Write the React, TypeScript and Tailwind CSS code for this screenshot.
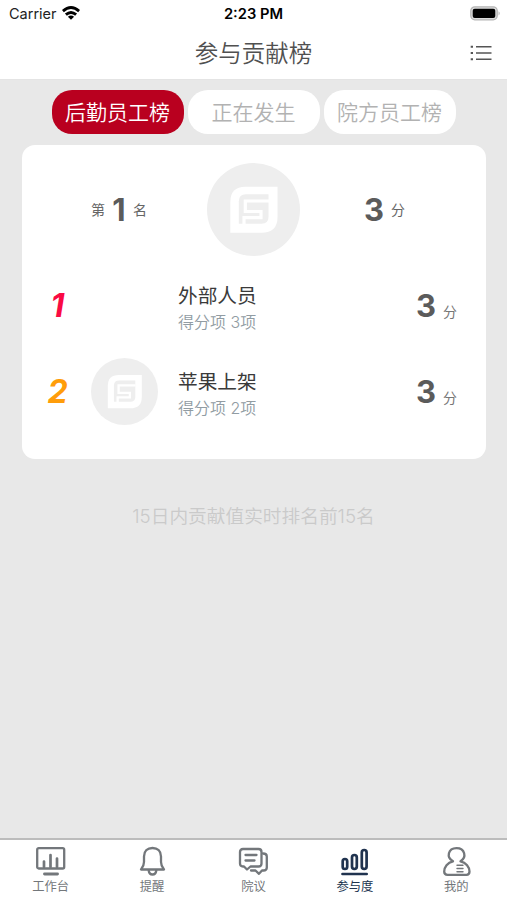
import React from "react";

const CJK = "font-['Inter','Noto_Sans_CJK_SC',sans-serif]";

function Logo({ className }: { className: string }) {
  return (
    <svg viewBox="0 0 93 93" className={className}>
      <circle cx="46.5" cy="46.5" r="46.5" fill="#eeeeee" />
      <path d="M23.300 69.700V39Q23.300 23.700 38.500 23.700H70.500V54Q70.500 69.700 54.500 69.700Z" fill="#ffffff" />
      <path d="M31.800 60.700V38.500Q31.800 31.300 39 31.300H61.500V54Q61.500 60.700 54.500 60.700Z" fill="#eeeeee" />
      <path d="M62 38H38.300V48.500H54V54.700H37V61" fill="none" stroke="#fff" strokeWidth="3.200" />
    </svg>
  );
}

function Wifi() {
  return (
    <svg viewBox="0 0 18 14" className="h-[14px] w-[18px] -translate-y-[1px]" fill="none" stroke="#000" strokeWidth="2.900">
      <path d="M.9 5.100Q9-2 17.100 5.100" />
      <path d="M3.900 8.600Q9 4.200 14.100 8.600" />
      <path d="M9 13.700L5.900 10.700Q9 8.300 12.100 10.700Z" fill="#000" stroke="none" />
    </svg>
  );
}

function Battery() {
  return (
    <svg viewBox="0 0 31 15" className="h-[15px] w-[31px] -translate-y-[1px]">
      <rect x=".8" y=".8" width="26.400" height="13" rx="4" fill="#ddd" stroke="#b5b5b5" strokeWidth="1.300" />
      <rect x="2.700" y="2.700" width="22.600" height="9.200" rx="2" fill="#000" />
      <path d="M28.600 5.200Q30.600 7.300 28.600 9.400Z" fill="#aaa" />
    </svg>
  );
}

function ListIcon() {
  return (
    <svg viewBox="0 0 22 16" className="h-4 w-[22px] -translate-y-[1px]" fill="none" stroke="#555" strokeWidth="1.500">
      <path d="M6 1.700H21.500M6 8H21.500M6 14.300H21.500" />
      <path d="M.7 1.700H3M.7 8H3M.7 14.300H3" strokeWidth="2" />
    </svg>
  );
}

const tabIcons = [
  <>
    <rect x="2.200" y="2.200" width="27" height="20.300" rx="1.500" />
    <path d="M9 21V15.500M15.500 21V9M22 21V12.500" strokeWidth="2.700" />
    <path d="M9.500 28H22.500" strokeWidth="2.900" />
  </>,
  <>
    <path d="M4 23.500H27Q24 20 24 16V10.500C24 5 20.500 2 15.500 2S7 5 7 10.500V16Q7 20 4 23.500Z" />
    <path d="M11.700 24.500Q12.200 28.500 15.500 28.500T19.300 24.500" />
  </>,
  <>
    <path d="M5 3H20.500Q23.500 3 23.500 6V17.500Q23.500 20.500 20.500 20.500H12.500L9 23.500L6 20.500H5Q2 20.500 2 17.500V6Q2 3 5 3Z" />
    <path d="M7.500 9H18.500M7.500 14.500H16.500" />
    <path d="M25 7.500Q28.800 7.500 28.800 10.500V21.500Q28.800 24.500 25.500 24.500H24L21 27.800L17.500 24.500H13" />
  </>,
  <>
    <rect x="3.700" y="13" width="4.500" height="10" rx="2.250" />
    <rect x="13" y="9" width="4.800" height="14" rx="2.400" />
    <rect x="22.800" y="4" width="4.800" height="19" rx="2.400" />
    <path d="M3.500 28H27.700" />
  </>,
  <>
    <path d="M12 15.300C5 11.500 7 2.200 15.500 2.200S26 11.500 19.500 15.300C25 16.500 28.500 21 28.500 25.500Q28.500 28.800 25.500 28.800H6.500Q3.200 28.800 3.200 25.500C3.200 21 6.500 16.500 12 15.300Z" />
    <path d="M16 19.300H22M16 22.500H22M16 25.700H22" strokeWidth="1.400" />
  </>,
];

const tabNames = ["工作台", "提醒", "院议", "参与度", "我的"];

const rows = [
  { rank: 1, name: "外部人员", items: "得分项 3项", score: 3, color: "text-[#fa0a43]", avatar: false },
  { rank: 2, name: "苹果上架", items: "得分项 2项", score: 3, color: "text-[#ff9d0a]", avatar: true },
];

export default function App() {
  return (
    <div className={`flex h-[900px] w-[507px] flex-col overflow-hidden bg-[#e8e8e8] ${CJK}`}>
      <header className="h-[80px] shrink-0 border-b border-[#e4e4e4] bg-white">
        <div className="grid h-7 grid-cols-3 items-center pr-[6px] pl-[9px] text-[14.500px] leading-7">
          <div className="flex items-center gap-[5px] text-[#222]">
            <span>Carrier</span>
            <Wifi />
          </div>
          <span className="-ml-[3px] text-center text-[14.700px] font-semibold text-black">2:23 PM</span>
          <div className="flex justify-end">
            <Battery />
          </div>
        </div>
        <div className="grid h-[51px] grid-cols-[1fr_auto_1fr] items-center px-[15px]">
          <span />
          <h1 className="text-[23.500px] leading-none font-[350] text-[#505050]">参与贡献榜</h1>
          <div className="flex justify-end">
            <ListIcon />
          </div>
        </div>
      </header>

      <main className="flex-1 px-[22px] pt-[10px]">
        <div className="flex justify-center gap-1 text-[21px] leading-none font-[350]">
          <button className="h-11 w-[132px] rounded-[20px] bg-[#b9001f] text-white">后勤员工榜</button>
          <button className="h-11 w-[132px] rounded-[20px] bg-white text-[#b2b2b2]">正在发生</button>
          <button className="h-11 w-[132px] rounded-[20px] bg-white text-[#b2b2b2]">院方员工榜</button>
        </div>

        <section className="mt-[11px] h-[314px] w-[464px] rounded-[13px] bg-white pt-[18px]">
          <div className="mb-[6px] grid grid-cols-[185px_93px_1fr] items-center text-[14px] text-[#666]">
            <div className="flex items-center pl-[69px]">
              <span>第</span>
              <b className="w-[28px] text-center text-[31px] leading-none text-[#5b5b5b]">1</b>
              <span>名</span>
            </div>
            <Logo className="size-[93px]" />
            <div className="flex items-center gap-[7px] pl-[64px]">
              <b className="text-[31px] leading-none font-bold text-[#5b5b5b]">3</b>
              <span>分</span>
            </div>
          </div>
          {rows.map((r) => (
            <div key={r.rank} className="grid h-[86px] grid-cols-[69px_87px_1fr_auto] items-center pr-[29px]">
              <b className={`w-[69px] pt-[2px] pl-[2px] text-center text-[32px] leading-none italic ${r.color}`}>{r.rank}</b>
              <div>{r.avatar && <Logo className="size-[67px]" />}</div>
              <div className="flex flex-col gap-[8px] pt-[6px]">
                <span className="text-[19.700px] leading-[20px] text-[#3a3a3a]">{r.name}</span>
                <span className="text-[16px] leading-[17px] font-[350] text-[#919ca3]">{r.items}</span>
              </div>
              <div className="flex items-center gap-[7px]">
                <b className="text-[31px] leading-none text-[#5b5b5b]">{r.score}</b>
                <span className="mt-[13px] text-[14px] leading-none text-[#777]">分</span>
              </div>
            </div>
          ))}
        </section>
        <p className="mt-[46px] text-center text-[18.700px] leading-6 font-[350] text-[#cacaca]">
          15日内贡献值实时排名前15名
        </p>
      </main>

      <nav className="grid h-[62px] shrink-0 grid-cols-5 border-t-2 border-[#bcbcbc] bg-white">
        {tabNames.map((name, i) => (
          <div
            key={name}
            className={`flex flex-col items-center pt-[6px] ${i === 3 ? "text-[#20334f]" : "text-[#73777b]"}`}
          >
            <svg
              viewBox="0 0 31 31"
              className="size-[31px]"
              fill="none"
              stroke="currentColor"
              strokeWidth={i === 3 ? 2.7 : 2.3}
              strokeLinecap="round"
              strokeLinejoin="round"
            >
              {tabIcons[i]}
            </svg>
            <span className="mt-[2px] text-[12.300px] leading-[15px]">{name}</span>
          </div>
        ))}
      </nav>
    </div>
  );
}
